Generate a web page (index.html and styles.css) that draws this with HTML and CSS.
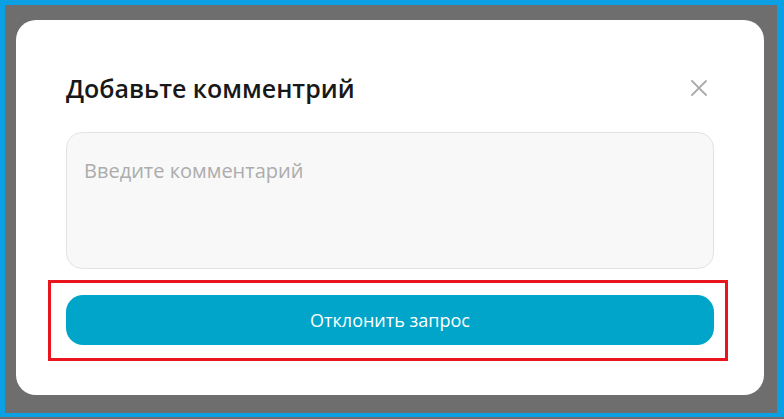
FILE: index.html
```html
<!DOCTYPE html>
<html lang="ru">
<head>
  <meta charset="UTF-8">
  <meta name="viewport" content="width=device-width, initial-scale=1.0">
  <title>Добавьте комментрий</title>
  <link rel="stylesheet" href="styles.css">
</head>
<body>

<div class="frame">
  <div class="modal">
    <div class="modal-header">
      <h2 class="modal-title">Добавьте комментрий</h2>
      <button class="close-btn" aria-label="Закрыть">
        <svg width="16" height="16" viewBox="0 0 16 16">
          <path d="M1 1L15 15M15 1L1 15" stroke="#ababab" stroke-width="1.8" stroke-linecap="round" fill="none"/>
        </svg>
      </button>
    </div>
    <textarea class="comment" placeholder="Введите комментарий"></textarea>
    <div class="action">
      <button class="reject-btn">Отклонить запрос</button>
    </div>
  </div>
</div>

</body>
</html>
```

FILE: styles.css
```css
* {
  box-sizing: border-box;
}

body {
  margin: 0;
  width: 784px;
  height: 419px;
  background-color: #6e6e6e;
  font-family: "Open Sans", "Noto Sans", sans-serif;
  overflow: hidden;
}

.frame {
  height: 417px;
  border-style: solid;
  border-color: #0aa0e3;
  border-width: 5px 7px 4px 5px;
  padding: 15px 0 0 11px;
}

.modal {
  width: 748px;
  height: 375px;
  background-color: #fff;
  border-radius: 20px;
  padding: 50px 50px;
  display: flex;
  flex-direction: column;
}

.modal-header {
  display: flex;
  justify-content: space-between;
  align-items: center;
  height: 36px;
  margin-bottom: 26px;
}

.modal-title {
  margin: 0;
  font-size: 25px;
  font-weight: 600;
  line-height: 36px;
  color: #181818;
}

.close-btn {
  width: 30px;
  height: 30px;
  padding: 0;
  border: none;
  background: none;
  display: flex;
  align-items: center;
  justify-content: center;
  cursor: pointer;
}

.comment {
  display: block;
  width: 100%;
  height: 137px;
  resize: none;
  background-color: #f8f8f8;
  border: 1px solid #e3e3e3;
  border-radius: 16px;
  padding: 24px 17px;
  font-family: "Open Sans", "Noto Sans", sans-serif;
  font-size: 20px;
  color: #333;
  outline: none;
}

.comment::placeholder {
  color: #acacac;
}

.action {
  position: relative;
  margin-top: 26px;
}

.action::before {
  content: "";
  position: absolute;
  left: -18px;
  right: -14px;
  top: -15px;
  bottom: -16px;
  border: 3px solid #e8141e;
  pointer-events: none;
}

.reject-btn {
  display: block;
  width: 100%;
  height: 50px;
  border: none;
  border-radius: 17px;
  background-color: #00a5c9;
  color: #fff;
  font-family: "Open Sans", "Noto Sans", sans-serif;
  font-size: 18px;
  cursor: pointer;
}
```
